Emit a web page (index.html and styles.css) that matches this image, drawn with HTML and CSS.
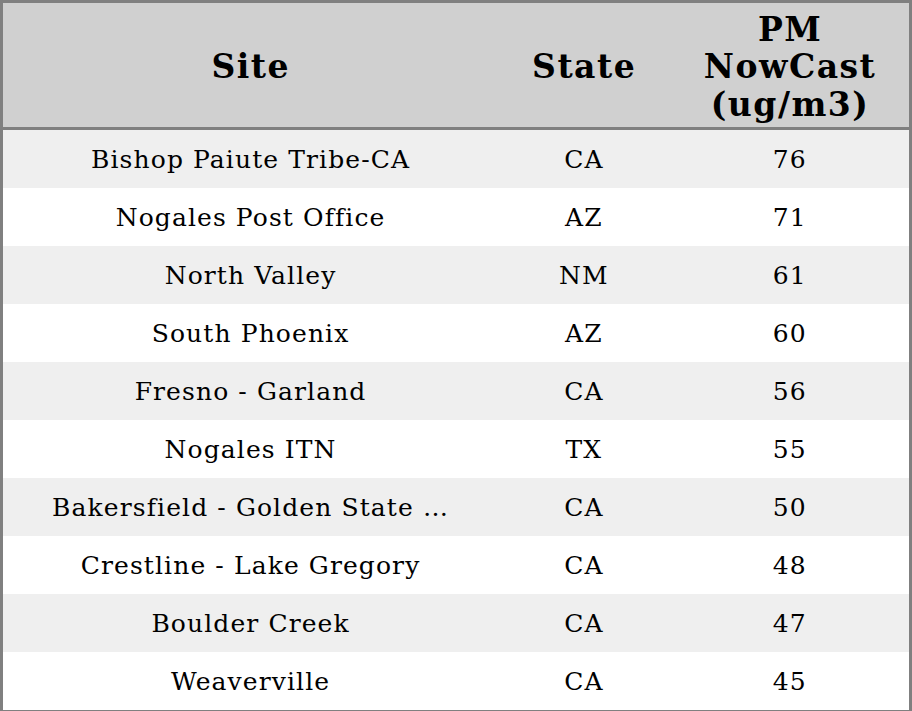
FILE: index.html
```html
<!DOCTYPE html>
<html>
<head>
<meta charset="utf-8">
<link rel="stylesheet" href="styles.css">
</head>
<body>
<table class="grid">
  <colgroup>
    <col class="c-site">
    <col class="c-state">
    <col class="c-pm">
  </colgroup>
  <thead>
    <tr class="head"><th>Site</th><th>State</th><th>PM<br>NowCast<br>(ug/m3)</th></tr>
  </thead>
  <tbody>
    <tr><td>Bishop Paiute Tribe-CA</td><td>CA</td><td>76</td></tr>
    <tr><td>Nogales Post Office</td><td>AZ</td><td>71</td></tr>
    <tr><td>North Valley</td><td>NM</td><td>61</td></tr>
    <tr><td>South Phoenix</td><td>AZ</td><td>60</td></tr>
    <tr><td>Fresno - Garland</td><td>CA</td><td>56</td></tr>
    <tr><td>Nogales ITN</td><td>TX</td><td>55</td></tr>
    <tr><td>Bakersfield - Golden State …</td><td>CA</td><td>50</td></tr>
    <tr><td>Crestline - Lake Gregory</td><td>CA</td><td>48</td></tr>
    <tr><td>Boulder Creek</td><td>CA</td><td>47</td></tr>
    <tr><td>Weaverville</td><td>CA</td><td>45</td></tr>
  </tbody>
</table>
</body>
</html>
```
FILE: styles.css
```css
html, body {
  margin: 0;
  padding: 0;
  background: #ffffff;
}
.grid {
  width: 912px;
  height: 711px;
  border-collapse: collapse;
  border: 3px solid #808080;
  font-family: "DejaVu Serif", serif;
  color: #000;
  table-layout: fixed;
}
.c-site { width: 494px; }
.c-state { width: 172px; }
.c-pm { width: 240px; }
.head th {
  background: #d0d0d0;
  font-size: 33px;
  letter-spacing: 1.5px;
  font-weight: bold;
  line-height: 37.5px;
  height: 120px;
  padding: 4px 0 0 1.5px;
  text-align: center;
  vertical-align: middle;
  border-bottom: 3px solid #808080;
}
tbody td {
  font-size: 25px;
  letter-spacing: 1.1px;
  height: 58px;
  padding: 0 0 0 1px;
  text-align: center;
  vertical-align: middle;
  white-space: nowrap;
}
tbody tr:nth-child(odd) td {
  background: #efefef;
}
```
